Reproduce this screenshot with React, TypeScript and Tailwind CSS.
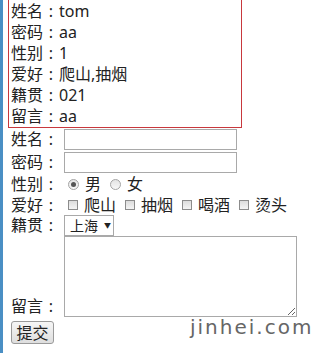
import type { ReactNode } from 'react'

const font = { fontFamily: '"Noto Sans", "Noto Sans CJK SC", sans-serif' }

const info = [
  ['姓名', 'tom'],
  ['密码', 'aa'],
  ['性别', '1'],
  ['爱好', '爬山,抽烟'],
  ['籍贯', '021'],
  ['留言', 'aa'],
]

function Colon() {
  return <span className="inline-block w-[16px] text-center">:</span>
}

function Label({ children }: { children: ReactNode }) {
  return (
    <span className="w-[53px] shrink-0 whitespace-nowrap">
      {children}
      <Colon />
    </span>
  )
}

function Radio({ checked }: { checked?: boolean }) {
  return (
    <span className="w-[11px] h-[11px] rounded-full border border-[#a4a4a4] bg-gradient-to-b from-[#e4e4e4] to-[#f8f8f8] flex items-center justify-center">
      {checked && <span className="w-[5px] h-[5px] rounded-full bg-[#555]" />}
    </span>
  )
}

function Check() {
  return <span className="w-[10px] h-[10px] border border-[#8c8c8c] bg-gradient-to-b from-[#dcdcdc] to-[#f4f4f4]" />
}

export default function App() {
  return (
    <div className="flex min-h-[353px] bg-white text-[16px] leading-[21px] text-[#222]" style={font}>
      {/* left strip */}
      <div className="w-[3px] shrink-0 bg-[#4a8fc4]" />

      <div className="relative flex-1 pl-[5px]">
        {/* result box */}
        <div className="w-[234px] border-x border-b border-solid border-x-[#c8383d] border-b-[#c8383d] pl-[2px] pt-[1px]">
          {info.map(([k, v]) => (
            <div key={k} className="h-[21px] whitespace-nowrap">
              {k}
              <Colon />
              {v}
            </div>
          ))}
        </div>

        {/* form */}
        <form className="pl-[3px]">
          <div className="flex items-center h-[23px]">
            <Label>姓名</Label>
            <input className="w-[173px] h-[21px] border border-[#a9a9a9] px-1 bg-white" />
          </div>
          <div className="flex items-center h-[23px]">
            <Label>密码</Label>
            <input type="password" className="w-[173px] h-[21px] border border-[#a9a9a9] px-1 bg-white" />
          </div>
          <div className="flex items-center h-[21px]">
            <Label>性别</Label>
            <span className="ml-[4px]"><Radio checked /></span>
            <span className="ml-[6px]">男</span>
            <span className="ml-[9px]"><Radio /></span>
            <span className="ml-[6px]">女</span>
          </div>
          <div className="flex items-center h-[20px]">
            <Label>爱好</Label>
            {['爬山', '抽烟', '喝酒', '烫头'].map((h, i) => (
              <span key={h} className={i === 0 ? 'flex items-center ml-[4px]' : 'flex items-center ml-[9px]'}>
                <Check />
                <span className="ml-[6px]">{h}</span>
              </span>
            ))}
          </div>
          <div className="flex items-center h-[21px]">
            <Label>籍贯</Label>
            <div className="w-[50px] h-[21px] border border-[#a9a9a9] flex items-center pl-[5px] text-[14px]">
              上海
              <span className="ml-[6px] text-[7px] leading-none">▼</span>
            </div>
          </div>
          <div className="flex items-end">
            <Label>留言</Label>
            <textarea className="w-[233px] h-[81px] border border-[#a9a9a9] bg-white" />
          </div>
          <button
            type="button"
            className="mt-[4px] w-[43px] h-[23px] border border-[#9a9a9a] rounded-[3px] bg-gradient-to-b from-[#f6f6f6] to-[#dedede] text-[16px] leading-[20px]"
          >
            提交
          </button>
        </form>

        {/* watermark */}
        <div
          className="absolute left-[187px] top-[317px] text-[20px] tracking-[2px] text-[#666]"
          style={{ fontFamily: '"DejaVu Sans", sans-serif' }}
        >
          jinhei.com
        </div>
      </div>
    </div>
  )
}
